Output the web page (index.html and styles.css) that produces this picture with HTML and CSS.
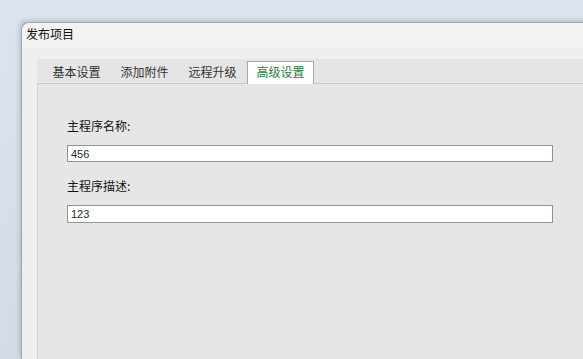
FILE: index.html
```html
<!DOCTYPE html>
<html lang="zh-CN">
<head>
<meta charset="UTF-8" />
<meta name="viewport" content="width=device-width, initial-scale=1" />
<title>发布项目</title>
<link rel="stylesheet" href="styles.css">
</head>
<body>

<div class="desk">
  <div class="window">
    <div class="titlebar">发布项目</div>
    <div class="window-body">
      <div class="tabs">
        <div class="tab">基本设置</div>
        <div class="tab">添加附件</div>
        <div class="tab">远程升级</div>
        <div class="tab active">高级设置</div>
      </div>
      <div class="panel">
        <label class="field-label" for="name">主程序名称:</label>
        <input class="field" id="name" type="text" value="456">
        <label class="field-label second" for="desc">主程序描述:</label>
        <input class="field tall" id="desc" type="text" value="123">
      </div>
    </div>
  </div>
</div>

</body>
</html>
```

FILE: styles.css
```css
* {
  box-sizing: border-box;
}
html, body {
  margin: 0;
  height: 100%;
  overflow: hidden;
}
body {
  font-family: "Noto Sans CJK SC", "Noto Sans", sans-serif;
  font-size: 12px;
  color: #1a1a1a;
}
.desk {
  height: 100%;
  padding: 22px 0 0 21px;
  background: linear-gradient(180deg, #dde4ef 0%, #d3dbe7 100%);
  display: flex;
}
.window {
  flex: 1;
  margin-right: -20px;
  display: flex;
  flex-direction: column;
  background: #efefef;
  border-top: 1px solid #a2a6ac;
  border-left: 1px solid #a2a6ac;
  border-top-left-radius: 8px;
  box-shadow: -2px -2px 4px rgba(90, 100, 120, 0.25);
}
.titlebar {
  height: 24px;
  line-height: 22px;
  padding-left: 4px;
  background: #f3f3f3;
  border-top-left-radius: 8px;
  font-size: 12px;
  color: #111;
}
.window-body {
  flex: 1;
  display: flex;
  flex-direction: column;
  padding: 12px 0 0 15px;
}
.tabs {
  height: 25px;
  display: flex;
  align-items: flex-end;
  gap: 1px;
  padding-left: 6px;
  background: #e5e5e5;
  border-bottom: 1px solid #cacaca;
}
.tab {
  width: 67px;
  height: 23px;
  line-height: 22px;
  text-align: center;
  color: #333;
  margin-bottom: -1px;
}
.tab.active {
  height: 23px;
  background: #fff;
  border: 1px solid #a8a8a8;
  border-bottom: none;
  color: #1f7a3e;
  line-height: 20px;
}
.panel {
  flex: 1;
  display: flex;
  flex-direction: column;
  align-items: flex-start;
  padding: 35px 0 0 29px;
  background: #e6e6e6;
  border-left: 1px solid #d4d4d4;
}
.field-label {
  line-height: 14px;
  color: #111;
}
.field-label.second {
  margin-top: 17px;
}
.field {
  margin-top: 12px;
  width: 486px;
  height: 17px;
  padding: 0 3px;
  border: 1px solid #8a9a8a;
  background: #fff;
  font-family: "Liberation Sans", sans-serif;
  font-size: 11px;
  color: #1a2a1a;
  outline: none;
}
.field.tall {
  height: 18px;
}
```
